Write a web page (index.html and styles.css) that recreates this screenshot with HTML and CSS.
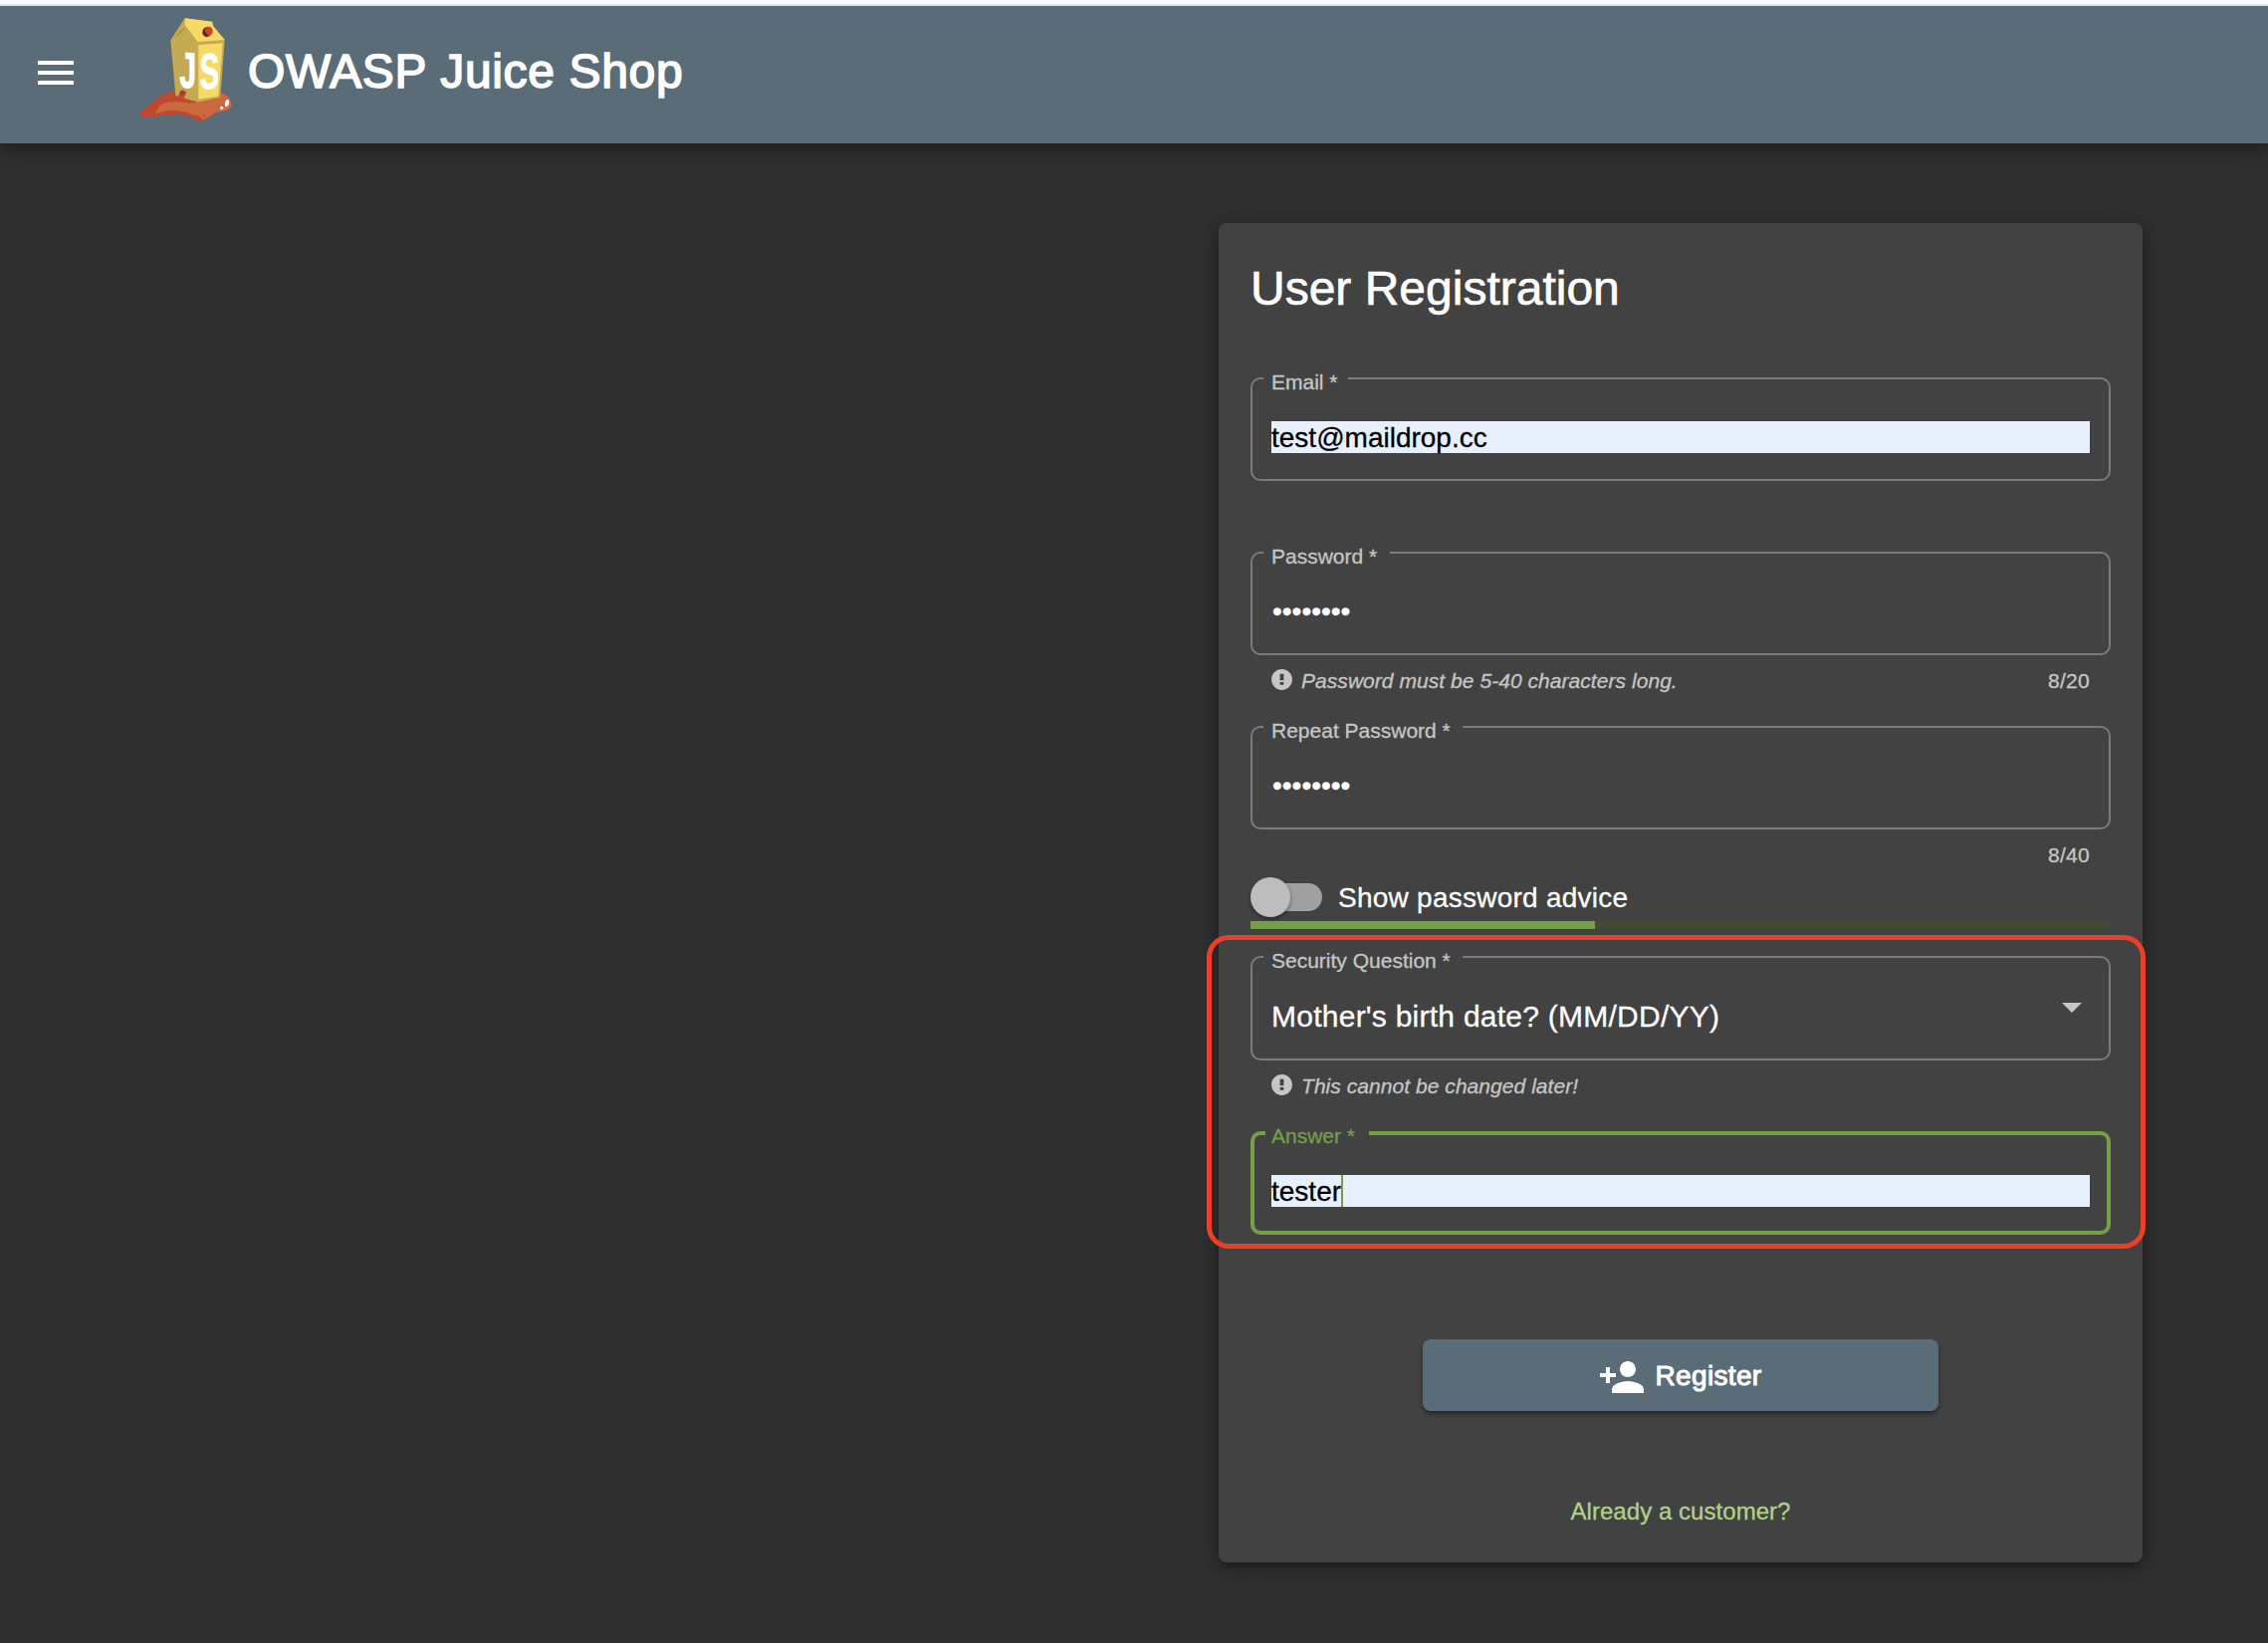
FILE: index.html
```html
<!DOCTYPE html>
<html lang="en">
<head>
<meta charset="utf-8">
<title>OWASP Juice Shop</title>
<link rel="stylesheet" href="styles.css">
</head>
<body>
<header class="toolbar">
  <button class="menu" aria-label="Open menu"><span></span><span></span><span></span></button>
  <svg class="logo" viewBox="0 0 360 375" aria-hidden="true">
    <path fill="#c1472f" d="M30 326C32 316 46 312 58 302C78 284 92 270 118 264C132 258 146 260 160 264L268 264C286 266 303 282 305 300C303 314 288 319 270 322C246 326 238 345 216 348C190 350 182 330 150 329C110 327 76 338 42 339C32 338 29 332 30 326Z"/>
    <path fill="#cb693e" d="M76 324C86 306 96 294 116 292C150 290 178 296 203 292L268 264C290 266 305 284 305 302C302 314 286 319 268 321C246 326 234 343 218 346L206 334L190 332C170 322 140 316 112 319C98 320 86 324 76 328Z"/>
    <path fill="#c1472f" d="M192 334Q206 332 212 342Q200 344 192 334ZM216 332L225 329L220 338Z"/>
    <path fill="#c4aa52" d="M164 40L121 106L136 273L203 293L271 278L284 106L248 62L246 50Z"/>
    <path fill="#ba8f45" d="M164 66L126 101L150 86L164 71Z"/>
    <path fill="#f7d965" d="M164 40L246 50L249 63L284 105L203 111L164 60Z"/>
    <path fill="#f7d965" d="M205 120L278 115L265 275L205 284Z"/>
    <ellipse cx="230" cy="82" rx="13" ry="15" fill="#6d2219"/>
    <ellipse cx="236" cy="79" rx="12" ry="14" fill="#c1472f"/>
    <path d="M221 74L236 94L226 94L218 86Z" fill="#6d2219"/>
    <text class="mark" transform="translate(148 247) skewY(5) scale(.6 1)">J</text>
    <text class="mark" transform="translate(209 254) skewY(-4) scale(.57 1)">S</text>
    <path fill="#c1472f" d="M134 280Q148 276 147 266C148 255 166 252 168 264C169 272 160 276 162 284L203 292L180 296L134 288Z"/>
    <ellipse cx="156" cy="266" rx="6" ry="6" fill="#a63a28"/>
    <ellipse cx="291" cy="296" rx="6" ry="11" transform="rotate(12 291 296)" fill="#fff"/>
    <circle cx="275" cy="310" r="5" fill="#fff"/>
  </svg>
  <span class="brand">OWASP Juice Shop</span>
</header>
<main class="page">
  <section class="card">
    <h1>User Registration</h1>
    <div class="field">
      <fieldset class="frame email"><legend>Email *</legend><div class="input filled">test@maildrop.cc</div></fieldset>
      <div class="sub"></div>
    </div>
    <div class="field">
      <fieldset class="frame password"><legend>Password *</legend><div class="input dots">••••••••</div></fieldset>
      <div class="sub">
        <svg class="alert" viewBox="0 0 24 24"><path d="M12 2C6.480 2 2 6.480 2 12s4.480 10 10 10 10-4.480 10-10S17.520 2 12 2zm1.800 15h-3.600v-2.600h3.600v2.600zm0-4.300h-3.600V6.500h3.600v6.200z"/></svg>
        <em>Password must be 5-40 characters long.</em><span class="count">8/20</span>
      </div>
    </div>
    <div class="field short">
      <fieldset class="frame long"><legend>Repeat Password *</legend><div class="input dots">••••••••</div></fieldset>
      <div class="sub"><span class="count">8/40</span></div>
    </div>
    <div class="toggle"><span class="switch"><span class="thumb"></span></span><span class="toggle-label">Show password advice</span></div>
    <div class="progress"><div class="bar" style="width:40%"></div></div>
    <div class="security">
      <div class="field">
        <fieldset class="frame long select"><legend>Security Question *</legend><div class="value"><span>Mother's birth date? (MM/DD/YY)</span><i class="arrow"></i></div></fieldset>
        <div class="sub">
          <svg class="alert" viewBox="0 0 24 24"><path d="M12 2C6.480 2 2 6.480 2 12s4.480 10 10 10 10-4.480 10-10S17.520 2 12 2zm1.800 15h-3.600v-2.600h3.600v2.600zm0-4.300h-3.600V6.500h3.600v6.200z"/></svg>
          <em>This cannot be changed later!</em>
        </div>
      </div>
      <fieldset class="frame focused"><legend>Answer *</legend><div class="input filled">tester<span class="caret"></span></div></fieldset>
      <div class="highlight"></div>
    </div>
    <button class="register">
      <svg viewBox="0 0 24 24"><path d="M15 12c2.210 0 4-1.790 4-4s-1.790-4-4-4-4 1.790-4 4 1.790 4 4 4zm-9-2V7H4v3H1v2h3v3h2v-3h3v-2H6zm9 4c-2.670 0-8 1.340-8 4v2h16v-2c0-2.660-5.330-4-8-4z"/></svg>
      <span>Register</span>
    </button>
    <a class="login">Already a customer?</a>
  </section>
</main>
</body>
</html>
```
FILE: styles.css
```css
* { box-sizing: border-box; }
body {
  margin: 0;
  height: 1650px;
  overflow: hidden;
  background: #303030;
  color: #fff;
  font-family: "Liberation Sans", Arial, sans-serif;
}
.toolbar {
  position: relative;
  display: flex;
  height: 144px;
  border-top: 4px solid #fff;
  background: linear-gradient(#dfe4e1 2px, #5a6c77 2px);
  box-shadow: 0 6px 12px -2px rgba(0,0,0,.2), 0 8px 20px rgba(0,0,0,.14), 0 2px 36px rgba(0,0,0,.12);
}
.menu {
  display: flex;
  flex-direction: column;
  gap: 6px;
  width: 36px;
  margin: 57px 0 0 38px;
  padding: 0;
  border: 0;
  background: none;
  align-self: flex-start;
}
.menu span { height: 4px; background: #fff; }
.logo { width: 120px; height: 125px; margin: 1px 0 0 57px; }
.mark { font: bold 152px "Liberation Sans", Arial, sans-serif; fill: #fff; stroke: #fff; stroke-width: 3px; }
.brand {
  margin: 40px 0 0 -2px;
  font-size: 48px;
  line-height: 56px;
  letter-spacing: .65px;
  -webkit-text-stroke: 1.6px #fff;
}
.page { padding: 80px 0 0 1224px; }
.card {
  display: flex;
  flex-direction: column;
  width: 928px;
  height: 1345px;
  padding: 38px 32px 0;
  border-radius: 8px;
  background: #424242;
  box-shadow: 0 6px 6px -2px rgba(0,0,0,.2), 0 4px 16px rgba(0,0,0,.2), 0 4px 32px rgba(0,0,0,.2);
}
h1 {
  margin: 0 0 61px;
  font-size: 48px;
  line-height: 56px;
  font-weight: 400;
  -webkit-text-stroke: .7px #fff;
}
.field { height: 175px; }
.field.short { height: 152px; }
.frame {
  min-width: 0;
  height: 104px;
  margin: 0;
  padding: 42px 19px 0;
  border: 2px solid #7b7b7b;
  border-radius: 10px;
}
.frame legend {
  height: 2px;
  margin-left: -8px;
  padding: 0 0 0 8px;
  color: #c6c6c6;
  font-size: 21px;
  line-height: 10px;
  white-space: nowrap;
  -webkit-text-stroke: .3px currentColor;
}
.email legend { width: 85px; }
.password legend { width: 127px; }
.long legend { width: 200px; }
.input {
  height: 32px;
  font-size: 28px;
  line-height: 34px;
  white-space: nowrap;
  -webkit-text-stroke: .3px currentColor;
}
.dots { padding-left: 1px; line-height: 31px; }
.filled { background: #e8effd; color: #000; }
.sub {
  display: flex;
  align-items: center;
  height: 24px;
  margin-top: 14px;
  padding: 0 21px;
  color: #c6c6c6;
  font-size: 21px;
  -webkit-text-stroke: .3px #c6c6c6;
}
.sub em { letter-spacing: .05px; }
.alert { width: 25px; height: 25px; margin: -3px 7px 0 -2px; fill: #c6c6c6; stroke: none; -webkit-text-stroke: 0; }
.count { margin-left: auto; letter-spacing: .3px; }
.toggle {
  display: flex;
  align-items: center;
  height: 40px;
  font-size: 28px;
  letter-spacing: .25px;
  -webkit-text-stroke: .3px #fff;
}
.toggle-label { margin-top: 2px; }
.switch {
  display: flex;
  align-items: center;
  width: 68px;
  height: 28px;
  margin: 0 16px 0 4px;
  border-radius: 14px;
  background: #a0a0a0;
}
.thumb {
  flex: none;
  width: 40px;
  height: 40px;
  margin-left: -4px;
  border-radius: 50%;
  background: #bdbdbd;
  box-shadow: 0 2px 4px rgba(0,0,0,.4);
}
.progress { height: 8px; margin-top: 4px; background: #404b32; }
.bar { height: 8px; background: #749f46; }
.security { position: relative; margin-top: 27px; }
.security .field { height: 176px; }
.select { height: 105px; padding-top: 41px; }
.value {
  display: flex;
  align-items: flex-start;
  justify-content: space-between;
  font-size: 30px;
  line-height: 36px;
  letter-spacing: .25px;
  -webkit-text-stroke: .3px #fff;
}
.arrow {
  margin: 4px 8px 0 0;
  border: 10px solid transparent;
  border-top-color: #c6c6c6;
  border-bottom: 0;
}
.focused {
  padding: 40px 17px 0;
  border: 4px solid #749f46;
}
.focused legend { height: 4px; width: 104px; margin-left: -6px; padding-left: 6px; color: #749f46; }
.focused .input { display: flex; }
.caret { width: 2px; background: #749f46; }
.highlight {
  position: absolute;
  inset: -21px -35px -14px -44px;
  border: 5px solid #eb4025;
  border-radius: 22px;
}
.register {
  display: flex;
  align-items: center;
  justify-content: center;
  gap: 9px;
  width: 518px;
  height: 72px;
  margin: 105px 0 0;
  padding: 0 1px 0 0;
  align-self: center;
  border: 0;
  border-radius: 8px;
  background: #5a6c77;
  color: #fff;
  font: 28px/36px "Liberation Sans", Arial, sans-serif;
  letter-spacing: .35px;
  -webkit-text-stroke: 1px #fff;
  box-shadow: 0 4px 4px -2px rgba(0,0,0,.3), 0 3px 5px rgba(0,0,0,.25);
}
.register span { margin-top: 2px; }
.register svg { width: 48px; height: 48px; margin-top: 4px; fill: #fff; stroke: none; }
.login {
  margin-top: 87px;
  align-self: center;
  color: #b3d284;
  font-size: 24px;
  line-height: 28px;
  letter-spacing: .05px;
  -webkit-text-stroke: .3px #b3d284;
}
```
